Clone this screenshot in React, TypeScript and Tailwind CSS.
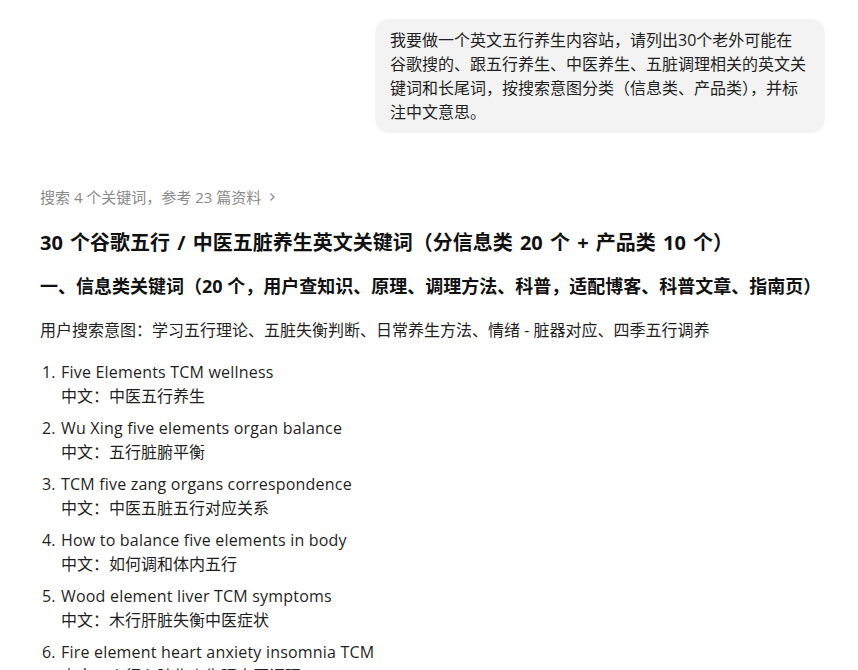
import React from "react";

const items: [string, string][] = [
  ["Five Elements TCM wellness", "中文：中医五行养生"],
  ["Wu Xing five elements organ balance", "中文：五行脏腑平衡"],
  ["TCM five zang organs correspondence", "中文：中医五脏五行对应关系"],
  ["How to balance five elements in body", "中文：如何调和体内五行"],
  ["Wood element liver TCM symptoms", "中文：木行肝脏失衡中医症状"],
  ["Fire element heart anxiety insomnia TCM", "中文：火行心脏焦虑失眠中医调理"],
];

export default function App() {
  return (
    <div
      className="w-[858px] h-[670px] overflow-hidden bg-white text-[#1f1f1f] pl-[40px] pr-[33px] pt-[19px]"
      style={{ fontFamily: '"Open Sans", "Noto Sans CJK SC", sans-serif' }}
    >
      <div className="flex justify-end">
        <div className="w-[450px] rounded-[14px] bg-[#f3f3f3] pl-[15px] pr-[19px] py-[9px] text-[16px] leading-[24px] text-[#1f1f1f]">
          我要做一个英文五行养生内容站，请列出30个老外可能在谷歌搜的、跟五行养生、中医养生、五脏调理相关的英文关键词和长尾词，按搜索意图分类（信息类、产品类），并标注中文意思。
        </div>
      </div>

      <div className="mt-[54px] flex items-center text-[15px] leading-[20px] text-[#8a8a8a]">
        <span>搜索 4 个关键词，参考 23 篇资料</span>
        <svg className="ml-[5px]" width="12" height="12" viewBox="0 0 12 12" fill="none">
          <path d="M4.5 2.5 L8 6 L4.5 9.5" stroke="#8a8a8a" strokeWidth="1.2" />
        </svg>
      </div>

      <h1 className="mt-[21px] text-[20px] leading-[30px] font-bold text-[#111] [word-spacing:2px]">
        30 个谷歌五行 / 中医五脏养生英文关键词（分信息类 20 个 + 产品类 10 个）
      </h1>

      <h2 className="mt-[14px] text-[18px] leading-[28px] font-bold text-[#111] whitespace-nowrap">
        一、信息类关键词（20 个，用户查知识、原理、调理方法、科普，适配博客、科普文章、指南页）
      </h2>

      <p className="mt-[18px] text-[16px] leading-[24px]">
        用户搜索意图：学习五行理论、五脏失衡判断、日常养生方法、情绪 - 脏器对应、四季五行调养
      </p>

      <ol className="mt-[18px] flex flex-col gap-[8px] text-[16px] leading-[24px]">
        {items.map(([en, zh], i) => (
          <li key={i} className="flex pl-[2px]">
            <span className="w-[19px] shrink-0">{i + 1}.</span>
            <div className="flex flex-col">
              <span className="tracking-[0.2px]">{en}</span>
              <span>{zh}</span>
            </div>
          </li>
        ))}
      </ol>
    </div>
  );
}
